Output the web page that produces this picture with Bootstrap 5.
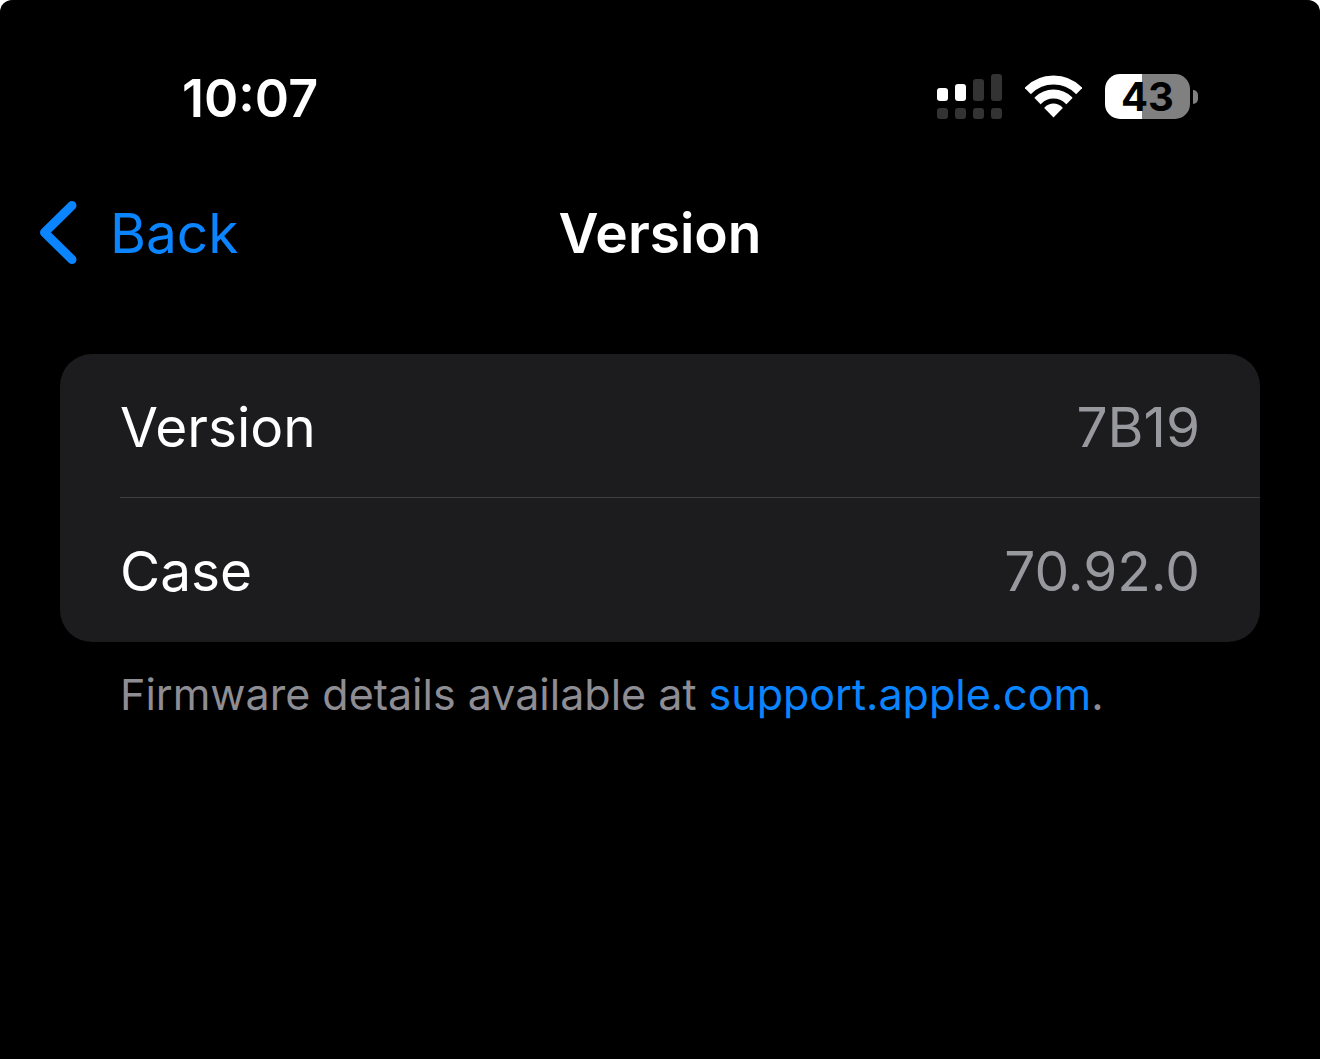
<!DOCTYPE html>
<html lang="en">
<head>
<meta charset="utf-8">
<meta name="viewport" content="width=device-width, initial-scale=1">
<title>Version</title>
<link href="https://cdn.jsdelivr.net/npm/bootstrap@5.3.0/dist/css/bootstrap.min.css" rel="stylesheet">
<style>
  html { background: #fff; }
  body { background: #fff; font-family: Inter, "Liberation Sans", sans-serif; }
  .screen { background: #000; color: #fff; border-radius: 12px 12px 0 0; }
  .status-bar { padding: 64px 122px 0 182px; height: 132px; }
  .clock { font-size: 52px; line-height: 70px; font-weight: 600; }
  .status-icons { gap: 23px; padding-top: 10px; }
  .battery { gap: 3px; }
  .battery-body { width: 85px; height: 45px; border-radius: 15px; background: linear-gradient(to right, #fff 37px, #808080 37px); color: #000; font-size: 40px; line-height: 45px; font-weight: 700; }
  .battery-tip { width: 5px; height: 14px; border-radius: 0 7px 7px 0; background: #808080; }
  .title-bar { display: grid; grid-template-columns: 1fr auto 1fr; padding: 0 40px; height: 202px; }
  .title-bar h1 { font-size: 55px; line-height: 68px; font-weight: 600; }
  .back-link { gap: 32px; font-size: 55px; line-height: 68px; color: #0a84ff; }
  .content { padding: 20px 60px 0; }
  .group { background: #1c1c1e; border-radius: 32px; font-size: 55px; line-height: 68px; --bs-list-group-bg: transparent; --bs-list-group-color: #fff; }
  .group .list-group-item { margin-left: 60px; padding: 39px 60px 36px 0; height: 144px; border-color: #3d3d41; }
  .group .list-group-item:first-child { border-width: 0 0 1px; }
  .group-value { color: #98989f; }
  .footnote { font-size: 43px; line-height: 56px; padding: 24px 60px 0; color: #8d8d93; }
  .footnote a { color: #0a84ff; }
</style>
<script src="https://cdn.jsdelivr.net/npm/bootstrap@5.3.0/dist/js/bootstrap.bundle.min.js"></script>
</head>
<body>
<div class="screen min-vh-100">
  <div class="status-bar d-flex justify-content-between align-items-start">
    <div class="clock">10:07</div>
    <div class="status-icons d-flex align-items-center">
      <svg width="65" height="45" viewBox="0 0 65 45" role="img" aria-label="Signal">
        <g fill="#fff"><rect y="14" width="11" height="13" rx="3"/><rect x="18" y="10" width="11" height="17" rx="3"/></g>
        <g fill="#333"><rect x="36" y="5" width="11" height="22" rx="3"/><rect x="54" width="11" height="27" rx="3"/>
        <rect y="34" width="11" height="11" rx="3"/><rect x="18" y="34" width="11" height="11" rx="3"/><rect x="36" y="34" width="11" height="11" rx="3"/><rect x="54" y="34" width="11" height="11" rx="3"/></g>
      </svg>
      <svg width="57" height="45" viewBox="0 0 57 45" role="img" aria-label="Wi-Fi">
        <clipPath id="fan"><path d="M28.5 43.5 -14 0H71Z"/></clipPath>
        <g clip-path="url(#fan)" fill="none" stroke="#fff"><circle cx="28.5" cy="41.5" r="35.5" stroke-width="9"/><circle cx="28.5" cy="41.5" r="21.5" stroke-width="9"/><circle cx="28.5" cy="41.5" r="12" fill="#fff" stroke="none"/></g>
      </svg>
      <div class="battery d-flex align-items-center">
        <div class="battery-body text-center">43</div>
        <div class="battery-tip"></div>
      </div>
    </div>
  </div>
  <header class="title-bar align-items-center">
    <a class="back-link d-inline-flex align-items-center text-decoration-none" href="#">
      <svg width="38" height="64" viewBox="0 0 38 64" fill="none" stroke="#0a84ff" stroke-width="9" stroke-linecap="round" stroke-linejoin="round" aria-hidden="true"><path d="M32 4.500 4.500 31.500 32 58.500"/></svg>
      <span>Back</span>
    </a>
    <h1 class="m-0">Version</h1>
  </header>
  <main class="content">
    <ul class="group list-group list-group-flush">
      <li class="list-group-item d-flex justify-content-between"><span>Version</span><span class="group-value">7B19</span></li>
      <li class="list-group-item d-flex justify-content-between"><span>Case</span><span class="group-value">70.92.0</span></li>
    </ul>
    <p class="footnote m-0">Firmware details available at <a class="text-decoration-none" href="#">support.apple.com</a>.</p>
  </main>
</div>
</body>
</html>
